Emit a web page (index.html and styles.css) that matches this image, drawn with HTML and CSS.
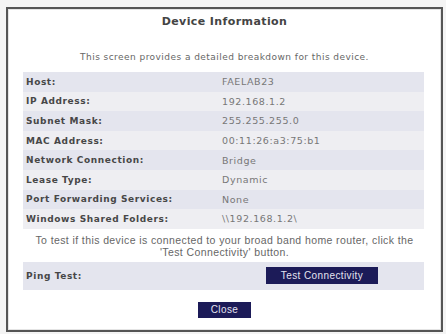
FILE: index.html
```html
<!DOCTYPE html>
<html lang="en">
<head>
    <meta charset="UTF-8">
    <title>Device Information</title>
    <link rel="stylesheet" href="styles.css">
</head>
<body>
    <div class="frame">
        <div class="inner">
            <h2>Device Information</h2>
            <p class="intro">This screen provides a detailed breakdown for this device.</p>

            <table class="info">
                <tr><td class="label">Host:</td><td>FAELAB23</td></tr>
                <tr><td class="label">IP Address:</td><td>192.168.1.2</td></tr>
                <tr><td class="label">Subnet Mask:</td><td>255.255.255.0</td></tr>
                <tr><td class="label">MAC Address:</td><td>00:11:26:a3:75:b1</td></tr>
                <tr><td class="label">Network Connection:</td><td>Bridge</td></tr>
                <tr><td class="label">Lease Type:</td><td>Dynamic</td></tr>
                <tr><td class="label">Port Forwarding Services:</td><td>None</td></tr>
                <tr><td class="label">Windows Shared Folders:</td><td>\\192.168.1.2\</td></tr>
            </table>

            <p class="note">To test if this device is connected to your broad band home router, click the<br>'Test Connectivity' button.</p>

            <div class="ping">
                <span class="label">Ping Test:</span>
                <button class="btn test-btn">Test Connectivity</button>
            </div>

            <div class="footer">
                <button class="btn close-btn">Close</button>
            </div>
        </div>
    </div>
</body>
</html>
```

FILE: styles.css
```css
* {
    margin: 0;
    padding: 0;
    box-sizing: border-box;
}

body {
    background: #f4f4f4;
    font-family: "DejaVu Sans", Verdana, sans-serif;
    color: #444;
    width: 446px;
    height: 334px;
    overflow: hidden;
}

.frame {
    margin: 7px 3px 0 6px;
    height: 325px;
    border: 2px solid #555;
    background: #fff;
}

.inner {
    height: 100%;
    border: 1px solid #e4e4e4;
    padding: 0 14px;
}

h2 {
    font-size: 11px;
    line-height: 14px;
    font-weight: bold;
    color: #444;
    text-align: center;
    margin-top: 5px;
    letter-spacing: 0.4px;
}

.intro {
    font-size: 9px;
    line-height: 12px;
    letter-spacing: 0.45px;
    color: #666;
    text-align: center;
    margin-top: 22px;
}

.info {
    width: 401px;
    margin-top: 9px;
    border-collapse: collapse;
    font-size: 9.5px;
    letter-spacing: 0.6px;
    color: #777;
}

.info td {
    height: 19.6px;
    padding: 0 0 0 3px;
    vertical-align: middle;
}

.info td.label {
    width: 196px;
    font-size: 9px;
}

.info tr:nth-child(odd) {
    background: #e4e5ee;
}

.info tr:nth-child(even) {
    background: #eeeef2;
}

.label {
    font-weight: bold;
    color: #474747;
    letter-spacing: 0.6px;
}

.note {
    font-family: "Liberation Sans", Arial, sans-serif;
    font-size: 10.5px;
    line-height: 12px;
    letter-spacing: 0.4px;
    color: #666;
    text-align: center;
    margin-top: 5px;
}

.ping {
    width: 401px;
    height: 28px;
    margin-top: 4px;
    background: #e4e5ee;
    display: flex;
    align-items: center;
    padding-left: 3px;
    font-size: 9px;
}

.ping .label {
    width: 240px;
}

.btn {
    background: #1c1b58;
    color: #e4e4f0;
    border: none;
    font-family: "Liberation Sans", Arial, sans-serif;
    font-size: 10px;
    letter-spacing: 0.4px;
    height: 17px;
}

.test-btn {
    width: 112px;
}

.footer {
    display: flex;
    justify-content: center;
    margin-top: 12px;
}

.close-btn {
    width: 53px;
    height: 16px;
}
```
